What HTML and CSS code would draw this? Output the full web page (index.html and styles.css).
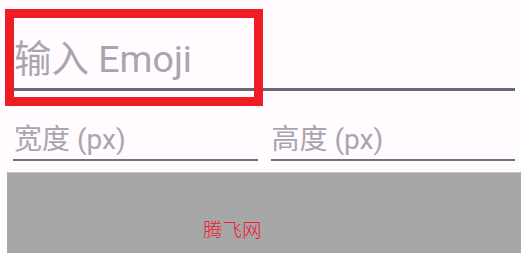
FILE: index.html
```html
<!DOCTYPE html>
<html lang="zh">
<head>
    <meta charset="UTF-8">
    <meta name="viewport" content="width=device-width, initial-scale=1.0">
    <title>Emoji</title>
    <link rel="stylesheet" href="styles.css">
</head>
<body>
    <main class="page">
        <div class="field field-emoji">
            <span class="placeholder">输入 Emoji</span>
        </div>
        <div class="size-row">
            <div class="field field-small">
                <span class="placeholder">宽度 (px)</span>
            </div>
            <div class="field field-small">
                <span class="placeholder">高度 (px)</span>
            </div>
        </div>
        <div class="preview">
            <span class="preview-text">腾飞网</span>
        </div>
    </main>
    <!-- annotation box drawn over the emoji field -->
    <div class="highlight"></div>
</body>
</html>
```

FILE: styles.css
```css
body {
    margin: 0;
    padding: 0;
    background-color: #fffbfe;
    font-family: Roboto, "Noto Sans CJK SC", sans-serif;
    overflow: hidden;
}

.page {
    display: flex;
    flex-direction: column;
}

.field {
    color: #a9a5ad;
    border-bottom: 2px solid #67637a;
}

.field-emoji {
    margin: 0 6px 0 14px;
    padding: 39px 0 9px 0;
    font-size: 37.5px;
    line-height: 40px;
    border-bottom: 3px solid #6a6579;
}

.size-row {
    display: flex;
    gap: 13px;
    margin: 33px 6px 0 13px;
}

.size-row .field {
    flex: 1;
    padding: 0 0 4px 1px;
    font-size: 28px;
    line-height: 31px;
    border-bottom-color: #74707e;
}

.preview {
    margin: 11px 0 0 7px;
    height: 90px;
    background-color: #a7a7a7;
    border-top: 1px solid #c4c4c4;
    padding: 46px 0 0 196px;
    box-sizing: border-box;
}

.preview-text {
    color: #ec2038;
    font-size: 19.5px;
    line-height: 24px;
    font-weight: 300;
}

.highlight {
    position: absolute;
    left: 5px;
    top: 9px;
    width: 240px;
    height: 79px;
    border: 9px solid #ee1c25;
}
```
